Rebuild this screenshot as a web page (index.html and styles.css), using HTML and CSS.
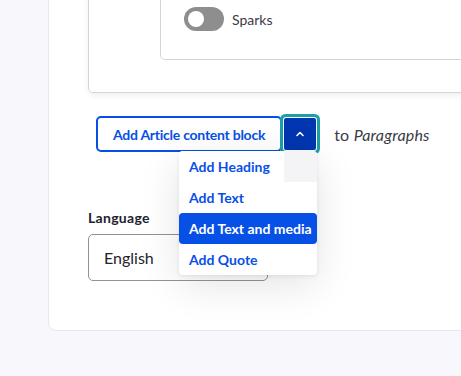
FILE: index.html
```html
<!DOCTYPE html>
<html lang="en">
<head>
<meta charset="utf-8">
<title>Paragraphs</title>
<link rel="stylesheet" href="styles.css">
</head>
<body>
<div class="card">
  <div class="widget">
    <div class="subform">
      <label class="toggle-row">
        <span class="toggle"><span class="knob"></span></span>
        <span class="toggle-label">Sparks</span>
      </label>
    </div>
  </div>

  <div class="actions">
    <div class="split">
      <button class="btn-main" type="button">Add Article content block</button>
      <button class="btn-toggle" type="button" aria-label="Show options">
        <svg width="10" height="8" viewBox="0 0 10 8"><path d="M2 5.5 L5 2.5 L8 5.5" fill="none" stroke="#fff" stroke-width="1.6" stroke-linecap="round" stroke-linejoin="round"/></svg>
      </button>
      <ul class="menu">
        <li class="menu-item first">Add Heading</li>
        <li class="menu-item">Add Text</li>
        <li class="menu-item active">Add Text and media</li>
        <li class="menu-item">Add Quote</li>
      </ul>
    </div>
    <span class="to-text">to <em>Paragraphs</em></span>
  </div>

  <div class="field">
    <div class="field-label">Language</div>
    <div class="select">English</div>
  </div>
</div>
</body>
</html>
```
FILE: styles.css
```css
html, body {
  margin: 0;
  padding: 0;
}
body {
  background: #f8f8fc;
  font-family: Lato, "Noto Sans", sans-serif;
  color: #232429;
  overflow: hidden;
  width: 461px;
  height: 376px;
}
.card {
  margin: -60px -40px 0 48px;
  background: #fff;
  border: 1px solid #e7e7ee;
  border-radius: 8px;
  padding: 20px 0 49px 39px;
}
.widget {
  border: 1px solid #d4d4da;
  border-radius: 5px;
  box-shadow: 0 3px 6px rgba(0, 0, 0, 0.06);
  padding: 20px 0 32px 71px;
}
.subform {
  border: 1px solid #d4d4da;
  border-radius: 5px;
  padding: 24px 0 28px 23px;
}
.toggle-row {
  display: flex;
  align-items: center;
  gap: 8px;
}
.toggle {
  width: 40px;
  height: 24px;
  border-radius: 12px;
  background: #8e8e8e;
  display: flex;
  align-items: center;
  padding-left: 4px;
  box-sizing: border-box;
}
.knob {
  width: 16px;
  height: 16px;
  border-radius: 50%;
  background: #fff;
}
.toggle-label {
  font-size: 14px;
  color: #3b3b44;
}
.actions {
  margin-top: 23px;
  padding-left: 8px;
  display: flex;
  align-items: center;
}
.split {
  position: relative;
  display: flex;
  align-items: center;
}
.btn-main {
  height: 36px;
  padding: 0 15px;
  border: 2px solid #0750e6;
  border-radius: 5px;
  background: #fff;
  color: #0750e6;
  font-family: inherit;
  font-weight: 700;
  font-size: 14px;
  letter-spacing: -0.25px;
}
.btn-toggle {
  margin-left: 2px;
  width: 32px;
  height: 32px;
  border: 0;
  padding: 0;
  background: #0036b1;
  border-radius: 2px;
  display: flex;
  align-items: center;
  justify-content: center;
  box-shadow: 0 0 0 1px #fff, 0 0 0 4px #1aa0a8;
}
.menu {
  position: absolute;
  top: 35px;
  left: 83px;
  width: 138px;
  margin: 0;
  padding: 0;
  list-style: none;
  background: #fff;
  border-radius: 4px;
  box-shadow: 0 10px 40px rgba(0, 0, 0, 0.11), 0 1px 4px rgba(0, 0, 0, 0.08);
  z-index: 2;
}
.menu-item {
  height: 31px;
  line-height: 31px;
  padding: 0 10px;
  font-size: 14px;
  font-weight: 700;
  color: #0750e6;
  border-radius: 4px;
  white-space: nowrap;
}
.menu-item.first {
  background: linear-gradient(to right, #fff 0, #fff 105px, #f4f4f6 105px);
  border-radius: 4px 4px 0 0;
}
.menu-item.active {
  background: #0750e6;
  color: #fff;
}
.to-text {
  margin-left: 18px;
  font-size: 16px;
  letter-spacing: 0.2px;
  color: #3b3b44;
}
.field {
  margin-top: 56px;
}
.field-label {
  font-size: 14px;
  font-weight: 700;
  line-height: 20px;
  letter-spacing: 0.3px;
  color: #222330;
}
.select {
  margin-top: 6px;
  width: 180px;
  height: 47px;
  box-sizing: border-box;
  border: 1px solid #8e929c;
  border-radius: 5px;
  padding-left: 15px;
  display: flex;
  align-items: center;
  font-size: 16px;
  color: #232429;
}
```
